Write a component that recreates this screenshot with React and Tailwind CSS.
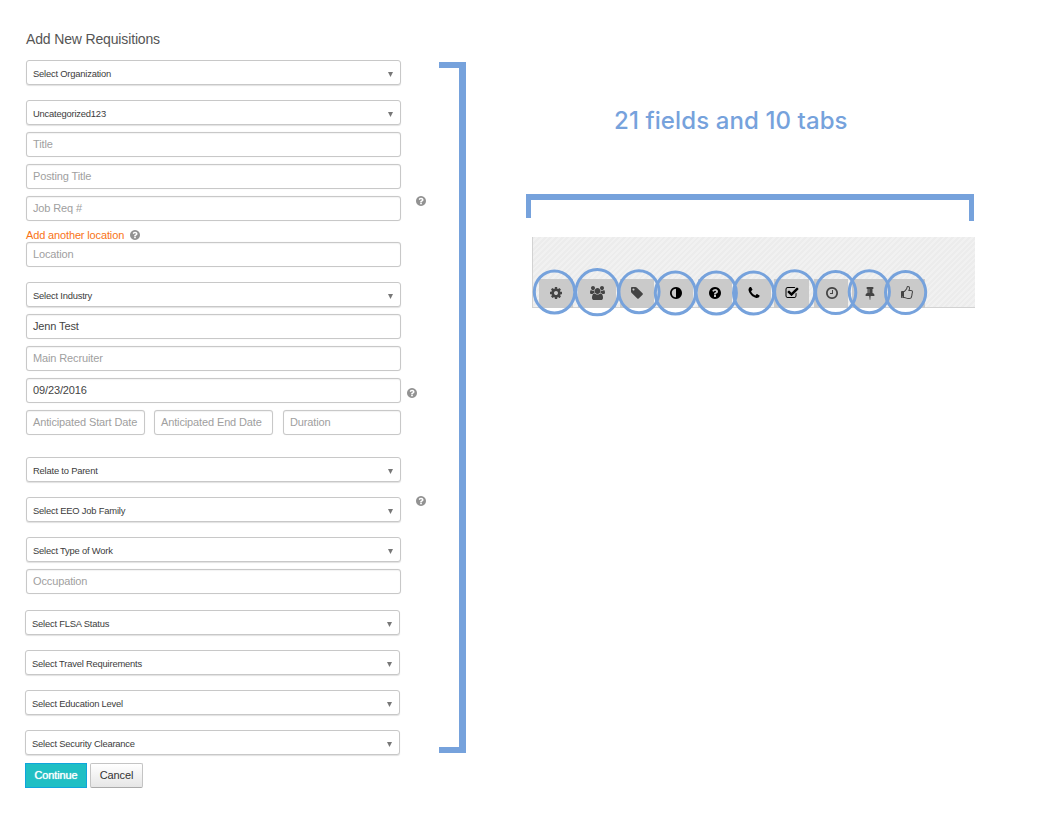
import React from "react";

const DISC = "M1664 896q0 209-103 385.5t-279.5 279.5-385.5 103-385.5-103-279.5-279.5-103-385.5 103-385.5 279.5-279.5 385.5-103 385.5 103 279.5 279.5 103 385.5z";
const QUESTION = "M1024 1376v-192q0-14-9-23t-23-9h-192q-14 0-23 9t-9 23v192q0 14 9 23t23 9h192q14 0 23-9t9-23zm256-672q0-88-55.5-163t-138.5-116-170-41q-243 0-371 213-15 24 8 42l132 100q7 6 19 6 16 0 25-12 53-68 86-92 34-24 86-24 48 0 85.5 26t37.5 59q0 38-20 61t-68 45q-63 28-115.5 86.5t-52.5 125.5v36q0 14 9 23t23 9h192q14 0 23-9t9-23q0-19 21.5-49.5t54.5-49.5q32-18 49-28.5t46-35 44.5-48 28-60.5 12.5-81z" + DISC;

const TABS = [
  { name: "settings", box: "w-[34px]", ink: "text-[#444]", d: "M1152 896q0-106-75-181t-181-75-181 75-75 181 75 181 181 75 181-75 75-181zm512-109v222q0 12-8 23t-20 13l-185 28q-19 54-39 91 35 50 107 138 10 12 10 25t-9 23q-27 37-99 108t-94 71q-12 0-26-9l-138-108q-44 23-91 38-16 136-29 186-7 28-36 28h-222q-14 0-24.5-8.5t-11.5-21.5l-28-184q-49-16-90-37l-141 107q-10 9-25 9-14 0-25-11-126-114-165-168-7-10-7-23 0-12 8-23 15-21 51-66.5t54-70.5q-27-50-41-99l-183-27q-13-2-21-12.5t-8-23.5v-222q0-12 8-23t19-13l186-28q14-46 39-92-40-57-107-138-10-12-10-24 0-10 9-23 26-36 98.5-107.5t94.5-71.5q13 0 26 10l138 107q44-23 91-38 16-136 29-186 7-28 36-28h222q14 0 24.5 8.5t11.5 21.5l28 184q49 16 90 37l142-107q9-9 24-9 13 0 25 10 129 119 165 170 7 8 7 22 0 12-8 23-15 21-51 66.5t-54 70.5q26 50 41 98l183 28q13 2 21 12.5t8 23.5z" },
  { name: "team", box: "w-[38px] ml-[5px]", ink: "text-[#444]", vb: "0 0 1920 1792", d: "M593 896q-162 5-265 128h-134q-82 0-138-40.5t-56-118.5q0-353 124-353 6 0 43.5 21t97.5 42.5 119 21.5q67 0 133-23-5 37-5 66 0 139 81 256zm1071 637q0 120-73 189.5t-194 69.5h-874q-121 0-194-69.5t-73-189.5q0-53 3.5-103.5t14-109 26.5-108.5 43-97.5 62-81 85.5-53.5 111.5-20q10 0 43 21.5t73 48 107 48 135 21.5 135-21.5 107-48 73-48 43-21.5q61 0 111.5 20t85.5 53.5 62 81 43 97.5 26.5 108.5 14 109 3.5 103.5zm-1024-1277q0 106-75 181t-181 75-181-75-75-181 75-181 181-75 181 75 75 181zm704 384q0 159-112.5 271.5t-271.5 112.5-271.5-112.5-112.5-271.5 112.5-271.5 271.5-112.5 271.5 112.5 112.5 271.5zm576 225q0 78-56 118.5t-138 40.5h-134q-103-123-265-128 81-117 81-256 0-29-5-66 66 23 133 23 59 0 119-21.5t97.5-42.5 43.5-21q124 0 124 353zm-128-609q0 106-75 181t-181 75-181-75-75-181 75-181 181-75 181 75 75 181z", wide: true },
  { name: "tag", box: "w-[34px] ml-1", ink: "text-[#444]", d: "M576 448q0-53-37.5-90.5t-90.5-37.5-90.5 37.5-37.5 90.5 37.5 90.5 90.5 37.5 90.5-37.5 37.5-90.5zm1067 576q0 53-37 90l-491 492q-39 37-91 37-53 0-90-37l-715-716q-38-37-64.5-101t-26.5-117v-416q0-52 38-90t90-38h416q53 0 117 26.5t102 64.5l715 714q37 39 37 91z" },
  { name: "contrast", box: "w-[34px] ml-[5px]", ink: "text-black", d: "M896 1440v-1088q-148 0-273 73t-198 198-73 273 73 273 198 198 273 73z" + DISC },
  { name: "help", box: "w-[34px] ml-[5px]", ink: "text-black", d: QUESTION },
  { name: "phone", box: "w-[34px] ml-[5px]", ink: "text-black", d: "M1600 1240q0 27-10 70.5t-21 68.5q-21 50-122 106-94 51-186 51-27 0-53-3.5t-57.5-12.5-47-14.5-55.5-20.5-49-18q-98-35-175-83-127-79-264-216t-216-264q-48-77-83-175-3-9-18-49t-20.5-55.5-14.5-47-12.5-57.5-3.5-53q0-92 51-186 56-101 106-122 25-11 68.5-21t70.5-10q14 0 21 3 18 6 53 76 11 19 30 54t35 63.5 31 53.5q3 4 17.5 25t21.5 35.5 7 28.5q0 20-28.5 50t-62 55-62 53-28.5 46q0 9 5 22.5t8.5 20.5 14 24 11.5 19q76 137 174 235t235 174q2 1 19 11.5t24 14 20.5 8.5 22.5 5q18 0 46-28.5t53-62 55-62 50-28.5q14 0 28.5 7t35.5 21.5 25 17.5q25 15 53.5 31t63.5 35 54 30q70 35 76 53 3 7 3 21z" },
  { name: "check", box: "w-[35px] ml-[3px]", ink: "text-black", d: "M1472 930v318q0 119-84.5 203.5t-203.5 84.5h-832q-119 0-203.5-84.5t-84.5-203.5v-832q0-119 84.5-203.5t203.5-84.5h832q63 0 117 25 15 7 18 23 3 17-9 29l-49 49q-10 10-23 10-3 0-9-2-23-6-45-6h-832q-66 0-113 47t-47 113v832q0 66 47 113t113 47h832q66 0 113-47t47-113v-254q0-13 9-22l64-64q10-10 23-10 6 0 12 3 20 8 20 29zm231-489l-814 814q-24 24-57 24t-57-24l-430-430q-24-24-24-57t24-57l110-110q24-24 57-24t57 24l263 263 647-647q24-24 57-24t57 24l110 110q24 24 24 57t-24 57z" },
  { name: "clock", box: "w-[34px] ml-[5px] pl-px", ink: "text-[#444]", d: "M1024 544v448q0 14-9 23t-23 9h-320q-14 0-23-9t-9-23v-64q0-14 9-23t23-9h224v-352q0-14 9-23t23-9h64q14 0 23 9t9 23zm416 352q0-148-73-273t-198-198-273-73-273 73-198 198-73 273 73 273 198 198 273 73 273-73 198-198 73-273z" + DISC },
  { name: "pin", box: "w-[34px] ml-[4px] pl-px", ink: "text-[#444]", d: "M800 864v-448q0-14-9-23t-23-9-23 9-9 23v448q0 14 9 23t23 9 23-9 9-23zm672 352q0 26-19 45t-45 19h-429l-51 483q-2 12-10.5 20.5t-20.5 8.5h-1q-27 0-32-27l-76-485h-404q-26 0-45-19t-19-45q0-123 78.5-221.5t177.5-98.5v-512q-52 0-90-38t-38-90 38-90 90-38h640q52 0 90 38t38 90-38 90-90 38v512q99 0 177.5 98.5t78.5 221.5z" },
  { name: "like", box: "w-[36px] ml-[3px]", ink: "text-[#444]", d: "M256 1408q0-26-19-45t-45-19-45 19-19 45 19 45 45 19 45-19 19-45zm1152-640q0-51-39-89.5t-89-38.5h-352q0-58 48-159.5t48-160.5q0-98-32-145t-128-47q-26 26-38 85t-30.5 125.5-59.5 109.5q-22 23-77 91-4 5-23 30t-31.5 41-34.5 42.5-40 44-38.5 35.5-40 27-35.5 9h-32v640h32q13 0 31.5 3t33 6.5 38 11 35 11.5 35.5 12.5 29 10.5q211 73 342 73h121q192 0 192-167 0-26-5-56 30-16 47.5-52.5t17.5-73.5-18-69q53-50 53-119 0-25-10-55.5t-25-47.5q32-1 53.5-47t21.5-81zm128-1q0 89-49 163 9 33 9 69 0 77-38 144 3 21 3 43 0 101-60 178 1 139-85 219.5t-227 80.5h-129q-96 0-189.5-22.5t-216.5-65.5q-116-40-138-40h-288q-53 0-90.5-37.5t-37.5-90.5v-640q0-53 37.5-90.5t90.5-37.5h274q36-24 137-155 58-75 107-128 24-25 35.5-85.5t30.5-126.5 62-108q39-37 90-37 84 0 151 32.5t102 101.5 35 186q0 93-48 192h176q104 0 180 76t76 179z", vb: "-128 0 1792 1792" },
];

// Ring centres and radii, relative to the tab strip's top-left corner.
const RINGS = [
  [22.5, 55, 20.2, 21], [65.2, 55.2, 21.4, 22.6], [107, 54.8, 20.1, 21], [143.4, 56, 20.1, 21], [184.3, 56, 20.1, 21],
  [221.6, 56, 20.1, 21], [262.7, 54.8, 20.1, 21], [303.7, 55.6, 20.1, 21], [337.3, 54.8, 20.1, 21], [373.6, 55.6, 20.1, 21],
];

function Help({ className }) {
  return (
    <svg viewBox="128 128 1536 1536" className={`size-[10px] shrink-0 fill-[#929292] ${className}`} fillRule="evenodd">
      <path d={QUESTION} />
    </svg>
  );
}

function Select({ label, className = "" }) {
  return (
    <div className={`flex h-[25px] w-[375px] shrink-0 items-center justify-between rounded-[3px] border border-[#c8c8c8] bg-white pr-[7px] pl-[6px] shadow-[0_1px_1px_rgba(0,0,0,0.12)] ${className}`}>
      <span className="pt-[2px] text-[9.4px] leading-none tracking-[-0.2px] whitespace-nowrap text-[#3c3c3c]">{label}</span>
      <svg viewBox="0 0 5 5" className="mt-[3px] size-[5px] fill-[#777]">
        <path d="M0 0h5L2.5 5z" />
      </svg>
    </div>
  );
}

function Input({ value, filled, className = "w-[375px]" }) {
  return (
    <div className={`flex h-[25px] shrink-0 items-center rounded-[3px] border border-[#c8c8c8] bg-white pb-px pl-[6px] shadow-[inset_0_1px_1px_rgba(0,0,0,0.05),0_0_1px_rgba(0,0,0,0.12)] ${className}`}>
      <span className={`text-[11px] leading-none tracking-[-0.13px] whitespace-nowrap ${filled ? "text-[#444]" : "text-[#a0a0a0]"}`}>{value}</span>
    </div>
  );
}

export default function App() {
  return (
    <div className="flex h-[818px] w-[1054px] overflow-hidden bg-white font-['Liberation_Sans',Arial,sans-serif]">
      <form className="flex w-[439px] shrink-0 flex-col pl-[26px]">
        <h1 className="mt-[31px] h-[29px] text-[14px] leading-[16px] tracking-[-0.15px] text-[#555]">Add New Requisitions</h1>
        <Select label="Select Organization" />
        <div className="mt-[15px] flex flex-col gap-[7px]">
          <Select label="Uncategorized123" />
          <Input value="Title" />
          <Input value="Posting Title" />
          <div className="flex">
            <Input value="Job Req #" />
            <Help className="ml-[15px]" />
          </div>
        </div>
        <div className="mt-2 mb-px flex h-[12px] items-center">
          <a className="text-[11px] leading-none tracking-[-0.14px] whitespace-nowrap text-[#f97316]">Add another location</a>
          <Help className="ml-[6px]" />
        </div>
        <Input value="Location" />
        <Select label="Select Industry" className="mt-[15px]" />
        <div className="mt-[7px] flex flex-col gap-[7px]">
          <Input value="Jenn Test" filled />
          <Input value="Main Recruiter" />
          <div className="flex">
            <Input value="09/23/2016" filled />
            <Help className="mt-[10px] ml-[6px]" />
          </div>
          <div className="flex">
            <Input value="Anticipated Start Date" className="w-[119px]" />
            <Input value="Anticipated End Date" className="ml-[9px] w-[119px]" />
            <Input value="Duration" className="ml-[10px] w-[118px]" />
          </div>
        </div>
        <div className="mt-[22px] flex flex-col gap-[15px]">
          <Select label="Relate to Parent" />
          <div className="flex">
            <Select label="Select EEO Job Family" />
            <Help className="-mt-px ml-[15px]" />
          </div>
          <Select label="Select Type of Work" />
        </div>
        <Input value="Occupation" className="mt-[7px] w-[375px]" />
        <div className="mt-[16px] -ml-px flex flex-col gap-[15px]">
          <Select label="Select FLSA Status" />
          <Select label="Select Travel Requirements" />
          <Select label="Select Education Level" />
          <Select label="Select Security Clearance" />
        </div>
        <div className="mt-[8px] -ml-px flex gap-[3px] text-[11px] leading-none tracking-[-0.12px]">
          <button className="h-[25px] w-[62px] border border-[#0fa5dc] bg-[#1fbfc4] text-white [text-shadow:0_0_1px_#fff]">Continue</button>
          <button className="h-[25px] w-[53px] rounded-[2px] border border-[#c4c4c4] border-b-[#aaa] bg-linear-to-b from-white to-[#e6e6e6] text-[#333]">Cancel</button>
        </div>
      </form>

      <div className="mt-[62px] h-[691px] w-[27px] shrink-0 border-y-[6px] border-r-[7px] border-[#76a2dc]" />

      <section className="ml-[60px] flex w-[449px] flex-col">
        <h2 className="mt-[105px] ml-[88px] h-[32px] font-['Inter',sans-serif] text-[24px] leading-[32px] font-medium tracking-[0.1px] whitespace-nowrap text-[#76a2dc]">21 fields and 10 tabs</h2>
        <div className="mt-[57px] flex h-[27px] w-[448px] items-start justify-between border-t-[6px] border-[#76a2dc]">
          <div className="h-[18px] w-[5px] bg-[#76a2dc]" />
          <div className="h-[21px] w-[5px] bg-[#76a2dc]" />
        </div>
        <div className="relative mt-[16px] ml-[6px] flex h-[71px] w-[443px] items-end border-b border-l border-[#d2d2d2] bg-[repeating-linear-gradient(135deg,#ececec_0px,#ececec_2px,#f1f1f1_2px,#f1f1f1_4px)] pl-[6px]">
          {TABS.map((t) => (
            <div key={t.name} className={`-mb-px flex h-[29px] shrink-0 items-center justify-center bg-[#cacaca] pb-px ${t.box} ${t.ink}`}>
              <svg viewBox={t.vb || "0 0 1792 1792"} className={t.wide ? "h-[14px] w-[15px] fill-current" : "size-[14px] fill-current"} fillRule="evenodd">
                <path d={t.d} />
              </svg>
            </div>
          ))}
          <svg className="absolute top-0 -left-px h-[90px] w-[443px] overflow-visible" fill="none" stroke="#76a2dc" strokeWidth="3">
            {RINGS.map(([cx, cy, rx, ry]) => (
              <ellipse key={cx} cx={cx} cy={cy} rx={rx} ry={ry} />
            ))}
          </svg>
        </div>
      </section>
    </div>
  );
}
